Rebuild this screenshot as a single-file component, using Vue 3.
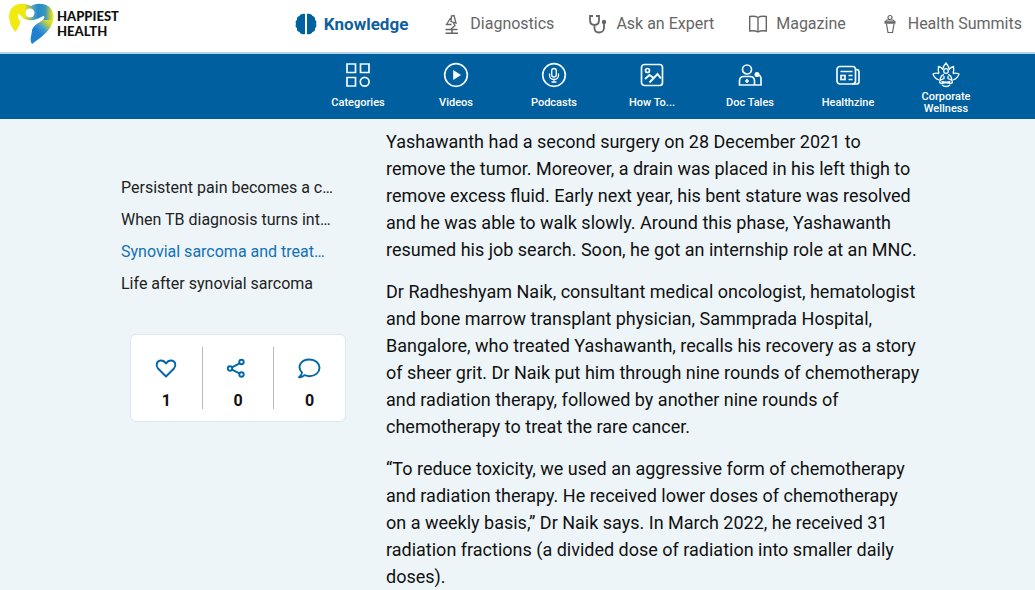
<script setup>
const topics = [
  { label: 'Knowledge', icon: 'brain', active: true },
  { label: 'Diagnostics', icon: 'microscope' },
  { label: 'Ask an Expert', icon: 'stethoscope' },
  { label: 'Magazine', icon: 'book' },
  { label: 'Health Summits', icon: 'podium' },
]
const sections = [
  { label: 'Categories', icon: 'grid' },
  { label: 'Videos', icon: 'play' },
  { label: 'Podcasts', icon: 'mic' },
  { label: 'How To...', icon: 'picture' },
  { label: 'Doc Tales', icon: 'doctor' },
  { label: 'Healthzine', icon: 'news' },
  { label: 'Corporate Wellness', icon: 'lotus' },
]
const contents = [
  { label: 'Persistent pain becomes a c…' },
  { label: 'When TB diagnosis turns int…' },
  { label: 'Synovial sarcoma and treat…', active: true },
  { label: 'Life after synovial sarcoma' },
]
const reactions = [
  { name: 'Like', icon: 'heart', count: 1 },
  { name: 'Share', icon: 'share', count: 0 },
  { name: 'Comment', icon: 'comment', count: 0 },
]
const paragraphs = [
  'Yashawanth had a second surgery on 28 December 2021 to remove the tumor. Moreover, a drain was placed in his left thigh to remove excess fluid. Early next year, his bent stature was resolved and he was able to walk slowly. Around this phase, Yashawanth resumed his job search. Soon, he got an internship role at an MNC.',
  'Dr Radheshyam Naik, consultant medical oncologist, hematologist and bone marrow transplant physician, Sammprada Hospital, Bangalore, who treated Yashawanth, recalls his recovery as a story of sheer grit. Dr Naik put him through nine rounds of chemotherapy and radiation therapy, followed by another nine rounds of chemotherapy to treat the rare cancer.',
  '“To reduce toxicity, we used an aggressive form of chemotherapy and radiation therapy. He received lower doses of chemotherapy on a weekly basis,” Dr Naik says. In March 2022, he received 31 radiation fractions (a divided dose of radiation into smaller daily doses).',
]
</script>

<template>
  <div class="page">
    <header class="header">
      <a class="brand" href="#">
        <svg class="brand-mark" viewBox="0 0 45 41" aria-hidden="true">
          <defs>
            <linearGradient id="wing" x1="0" y1="0" x2="1" y2="0">
              <stop offset="0" stop-color="#f4ea10" />
              <stop offset="0.35" stop-color="#f0e814" />
              <stop offset="0.52" stop-color="#5fa9a8" />
              <stop offset="0.65" stop-color="#2388d0" />
              <stop offset="0.82" stop-color="#3f97b8" />
              <stop offset="0.98" stop-color="#f2e812" />
            </linearGradient>
            <linearGradient id="body" gradientUnits="userSpaceOnUse" x1="43" y1="16" x2="30" y2="30">
              <stop offset="0" stop-color="#f2e812" />
              <stop offset="0.3" stop-color="#c9d63a" />
              <stop offset="0.7" stop-color="#3f9bd0" />
              <stop offset="1" stop-color="#1f80cf" />
            </linearGradient>
          </defs>
          <path fill="url(#wing)" d="M22 3C16 0 9 0 5 3C1 6 0 10 0 15C1 21 3 26 7 29C8 25 12 22 11 18C9 15 8 12 10 11C13 14 15 17 20 17C26 18 30 15 34 13C36 13 36 15 33 18L44 18C46 12 43 5 39 3C34 0 27 0 22 3Z" />
          <path fill="url(#body)" d="M44 17C43 26 34 33 23 41C20 36 23 32 23 27C25 22 29 20 34 17Z" />
          <circle cx="21" cy="10" r="4.500" fill="#fff" />
        </svg>
        <span class="brand-name">HAPPIEST<br>HEALTH</span>
      </a>
      <nav class="topics" aria-label="Main">
        <a v-for="t in topics" :key="t.label" href="#" class="topic" :class="{ active: t.active }">
          <svg v-if="t.icon === 'brain'" class="icon" viewBox="0 0 22 22" fill="#00629f">
            <path d="M10 1v20c-3 1-5-.5-5.500-2C2.500 18.500 1.500 17 2 15.200C.5 14 .2 12.500 1 11C.2 9.500.5 8 2 6.800C1.500 5 2.500 3.500 4.500 3C5 1.300 7.500.2 10 1z" />
            <path d="M12 1v20c3 1 5-.5 5.500-2c2-.5 3-2 2.500-3.800c1.500-1.200 1.800-2.700 1-4.200c.8-1.500.5-3-1-4.200c.5-1.800-.5-3.300-2.500-3.800C17 1.300 14.500.2 12 1z" />
          </svg>
          <svg v-else-if="t.icon === 'microscope'" class="icon" viewBox="0 0 22 22" fill="none" stroke="#666" stroke-width="1.500">
            <path d="M4.500 20.200h12.500M4.500 16.500h12M11 17v3" />
            <path d="M10.500 3l2.500-.5l2 7.500l-5-1.500zM9.500 5L5.500 11.500h5M12 9l2 3.500l-4 3.500" stroke-width="1.300" />
          </svg>
          <svg v-else-if="t.icon === 'stethoscope'" class="icon" viewBox="0 0 22 22" fill="none" stroke="#666" stroke-width="1.800">
            <path d="M6 3H3v4c0 3 1.500 5 4.500 5S12 10 12 7V3H9M7.500 12v3c0 3 2 4.500 4.500 4.500s5-1.500 5-4.500v-5" />
            <circle cx="17" cy="9" r="2.200" fill="#666" stroke="none" />
          </svg>
          <svg v-else-if="t.icon === 'book'" class="icon" viewBox="0 0 22 22" fill="none" stroke="#666" stroke-width="1.400">
            <path d="M11 4.500C8.500 3 5.500 3 2.700 3.500v14.500c3-.5 6-.3 8.300 1c2.300-1.300 5.300-1.500 8.300-1V3.500C16.500 3 13.500 3 11 4.500zV19" />
          </svg>
          <svg v-else class="icon" viewBox="0 0 22 22" fill="none" stroke="#666" stroke-width="1.200">
            <circle cx="11" cy="4.500" r="2" />
            <path d="M6 9l2-2h6L16 9M7.500 11l1.500 8.500h4.500L15 11" />
            <path d="M5.500 9.500h11" stroke-width="2.500" />
          </svg>
          <span>{{ t.label }}</span>
        </a>
      </nav>
    </header>

    <nav class="sections" aria-label="Sections">
      <a v-for="s in sections" :key="s.label" href="#" class="section">
        <svg class="section-icon" viewBox="0 0 28 28" fill="none" stroke="#f2f9ff" stroke-width="1.700" aria-hidden="true">
          <template v-if="s.icon === 'grid'">
            <path d="M3 3h8.500v8.500H3zM16.500 3H25v8.500h-8.500zM3 16.500h8.500V25H3z" />
            <circle cx="20.700" cy="20.700" r="4.400" />
          </template>
          <template v-else-if="s.icon === 'play'">
            <circle cx="14" cy="14" r="11.300" />
            <path d="M12 10.500v7l5.500-3.500z" fill="#fff" />
          </template>
          <template v-else-if="s.icon === 'mic'">
            <circle cx="14" cy="14" r="11.300" />
            <rect x="11.700" y="7.500" width="4.600" height="8.500" rx="2.300" stroke-width="1.400" />
            <path d="M9.500 12.500v1.500c0 3 2 4.500 4.500 4.500s4.500-1.500 4.500-4.500v-1.500M14 18.500v2.500M11.500 21h5" stroke-width="1.300" />
          </template>
          <template v-else-if="s.icon === 'picture'">
            <rect x="3.500" y="3.500" width="21" height="21" rx="3" />
            <circle cx="9.500" cy="9.500" r="2" />
            <path d="M7 18l4.500-4l3.500 2.500M11.500 21.500l8-8.500l3.500 4.500" stroke-width="2" />
          </template>
          <template v-else-if="s.icon === 'doctor'">
            <circle cx="11" cy="8.500" r="4.500" />
            <path d="M3.500 24v-4c0-3 2-4.500 4.500-4.500h6c2.500 0 4.500 1.500 4.500 4.500v4zM18.500 24H25v-6c0-2.500-1.500-4-3.500-4M11 18v4M9 20h4" />
            <circle cx="21" cy="13.500" r="2.500" fill="#fff" stroke="none" />
          </template>
          <template v-else-if="s.icon === 'news'">
            <rect x="3" y="5.500" width="18.500" height="17.500" rx="3" />
            <path d="M21.500 8.500h1c1.500 0 2.500 1 2.500 2.500v9.500c0 1.500-1 2.500-2.500 2.500H18M6.500 10.500h12M14.500 14.500h4M14.500 18.500h4" />
            <rect x="7" y="14.500" width="4" height="4" />
          </template>
          <g v-else stroke-width="1.300">
            <path d="M10.500 9C11 6 12 4 14 2c2 2 3 4 3.500 7M7 12.500C6 10 6 8 6.500 5.500C9 6 10 7 11 8.500M21 12.500c1-2.500 1-4.500.5-7C19 6 18 7 17 8.500M7 12.500C5 12 3 12 1 13c1 3 3 5 6 6M21 12.500c2-.5 4-.5 6 .5c-1 3-3 5-6 6" />
            <circle cx="14" cy="10" r="2.300" />
            <path d="M12 13.500c-2.500.5-3.500 2.500-4 5.500l4-1.500V15M16 13.500c2.500.5 3.500 2.500 4 5.500l-4-1.500V15M9 19c-2 1-2 3.500.5 3.500l9-2M19 19c2 1 2 3.500-.5 3.500l-9-2M10 24c2 2 6 2 8 0" />
          </g>
        </svg>
        <span class="section-label">{{ s.label }}</span>
      </a>
    </nav>

    <main class="main">
      <aside class="aside">
        <nav class="contents" aria-label="In this article">
          <a v-for="c in contents" :key="c.label" href="#" :class="{ current: c.active }">{{ c.label }}</a>
        </nav>
        <div class="reactions">
          <button v-for="r in reactions" :key="r.name" type="button" class="reaction" :aria-label="`${r.name} ${r.count}`">
            <svg class="reaction-icon" viewBox="0 0 24 24" fill="none" stroke="#0066a8" stroke-width="1.900" stroke-linejoin="round" aria-hidden="true">
              <path v-if="r.icon === 'heart'" d="M12 20.500L4 12.500C1.500 9.500 2.500 4.500 7 4.500c2.500 0 4 1.500 5 3c1-1.500 2.500-3 5-3c4.500 0 5.500 5 3 8z" />
              <g v-else-if="r.icon === 'share'">
                <circle cx="4" cy="12.500" r="2.200" />
                <circle cx="15.500" cy="6" r="2.200" />
                <circle cx="15.500" cy="18.500" r="2.200" />
                <path d="M6 11.300L13.500 7.300M6 13.700l7.500 3.700" />
              </g>
              <path v-else d="M4 16.500C-1 11.500 2 3.500 11.500 3.500c6 0 10 3.700 10 8.200s-4 8.500-10 8.500c-2 0-3.500-.5-5-1c-1.500 1.500-3.500 2.300-5.500 2C2.500 20 4 18.500 4 16.500z" />
            </svg>
            <span>{{ r.count }}</span>
          </button>
        </div>
      </aside>
      <article class="article">
        <p v-for="(p, i) in paragraphs" :key="i">{{ p }}</p>
      </article>
    </main>
  </div>
</template>

<style>
body {
  margin: 0;
  background: #edf5f8;
}
</style>

<style scoped>
.page {
  font-family: Roboto, "Liberation Sans", sans-serif;
  color: #111;
  height: 100vh;
  overflow: hidden;
}
a {
  color: inherit;
  text-decoration: none;
}
.header {
  display: flex;
  align-items: center;
  justify-content: space-between;
  height: 52px;
  box-sizing: border-box;
  padding: 0 13px 5px 9px;
  background: #fff;
}
.brand {
  display: flex;
  align-items: center;
  gap: 3px;
}
.brand-mark {
  width: 45px;
  height: 41px;
}
.brand-name {
  font-family: Lato, "Open Sans", sans-serif;
  font-size: 13px;
  font-weight: 900;
  line-height: 15px;
  color: #111;
}
.topics {
  display: flex;
  gap: 33px;
}
.topic {
  display: flex;
  align-items: center;
  gap: 7px;
  font-size: 16px;
  line-height: 24px;
  color: #666;
  white-space: nowrap;
}
.topic.active {
  font-size: 17px;
  font-weight: 700;
  color: #0f5f9f;
}
.icon {
  width: 22px;
  height: 22px;
}
.sections {
  display: flex;
  justify-content: flex-end;
  height: 67px;
  box-sizing: border-box;
  padding: 0 40px 0 0;
  border-top: 2px solid #b4d2e6;
  background: #005f9f;
}
.section {
  display: flex;
  flex-direction: column;
  align-items: center;
  width: 98px;
  padding-top: 7px;
  color: #fff;
}
.section-icon {
  flex: none;
  width: 28px;
  height: 28px;
}
.section-label {
  display: flex;
  flex: none;
  align-items: center;
  width: min-content;
  min-width: 60px;
  justify-content: center;
  height: 28px;
  font-size: 11px;
  font-weight: 500;
  line-height: 12px;
  text-align: center;
}
.main {
  display: flex;
  padding: 9px 40px 0 121px;
}
.aside {
  flex: none;
  width: 225px;
  margin-right: 40px;
  padding-top: 44px;
}
.contents {
  display: flex;
  flex-direction: column;
  font-size: 16px;
  line-height: 32px;
  color: #222;
}
.contents .current {
  color: #1470b3;
}
.reactions {
  display: flex;
  margin: 34px 0 0 9px;
  padding: 12px 0;
  border: 1px solid #dbe8f0;
  border-radius: 6px;
  background: #fff;
}
.reaction {
  flex: 1;
  display: flex;
  flex-direction: column;
  align-items: center;
  justify-content: flex-start;
  gap: 11px;
  padding: 9px 0 0;
  height: 62px;
  border: 0;
  background: none;
  font: 700 16px/20px Roboto, "Liberation Sans", sans-serif;
  color: #111;
}
.reaction + .reaction {
  border-left: 1px solid #bbb;
}
.reaction-icon {
  flex: none;
  width: 24px;
  height: 24px;
}
.article {
  flex: 0 1 535px;
  font-size: 18px;
  line-height: 27px;
}
.article p {
  margin: 0 0 15px;
}
</style>
